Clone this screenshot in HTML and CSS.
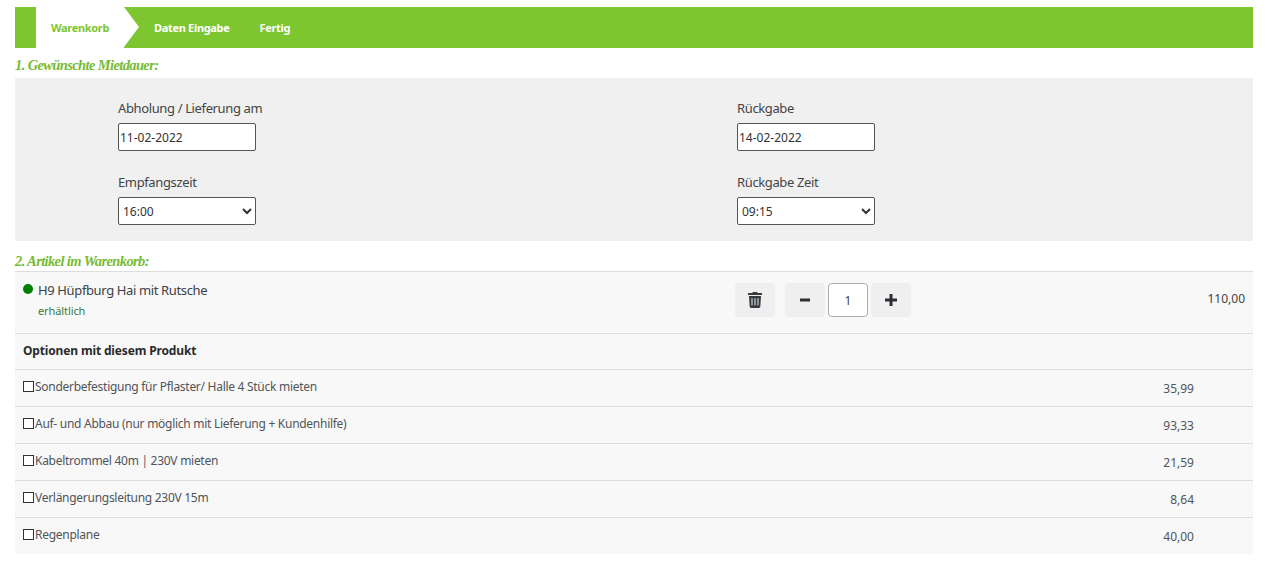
FILE: index.html
```html
<!DOCTYPE html>
<html lang="de">
<head>
<meta charset="utf-8">
<title>Warenkorb</title>
<link rel="stylesheet" href="styles.css">
</head>
<body>
<nav class="steps">
  <a class="step active">Warenkorb<span class="arrow"></span></a>
  <a class="step">Daten Eingabe</a>
  <a class="step">Fertig</a>
</nav>
<h2 class="title first">1. Gewünschte Mietdauer:</h2>
<section class="panel">
  <div class="field">
    <label>Abholung / Lieferung am</label>
    <input class="control" type="text" value="11-02-2022">
  </div>
  <div class="field">
    <label>Rückgabe</label>
    <input class="control" type="text" value="14-02-2022">
  </div>
  <div class="field">
    <label>Empfangszeit</label>
    <select class="control"><option>16:00</option></select>
  </div>
  <div class="field">
    <label>Rückgabe Zeit</label>
    <select class="control"><option>09:15</option></select>
  </div>
</section>
<h2 class="title second">2. Artikel im Warenkorb:</h2>
<section class="cart">
  <div class="product">
    <div class="info">
      <div class="name"><span class="dot"></span>H9 Hüpfburg Hai mit Rutsche</div>
      <div class="avail">erhältlich</div>
    </div>
    <div class="actions">
      <button class="btn trash" aria-label="Löschen">
        <svg width="14" height="16" viewBox="0 0 448 512"><path fill="#343a40" d="M432 32H312l-9.400-18.700A24 24 0 0 0 281.100 0H166.800a23.700 23.700 0 0 0-21.400 13.300L136 32H16A16 16 0 0 0 0 48v32a16 16 0 0 0 16 16h416a16 16 0 0 0 16-16V48a16 16 0 0 0-16-16zM53.200 467a48 48 0 0 0 47.900 45h245.800a48 48 0 0 0 47.900-45L416 128H32zM144 208v208a16 16 0 0 1-32 0V208a16 16 0 0 1 32 0zm96 0v208a16 16 0 0 1-32 0V208a16 16 0 0 1 32 0zm96 0v208a16 16 0 0 1-32 0V208a16 16 0 0 1 32 0z"/></svg>
      </button>
      <button class="btn minus" aria-label="Weniger">
        <svg width="10" height="12" viewBox="0 0 10 12"><rect x="0" y="4.500" width="10" height="3" fill="#2b2f33"/></svg>
      </button>
      <input class="qty" type="text" value="1">
      <button class="btn plus" aria-label="Mehr">
        <svg width="12" height="12" viewBox="0 0 12 12"><path fill="#2b2f33" d="M4.500 0h3v4.500H12v3H7.500V12h-3V7.500H0v-3h4.500z"/></svg>
      </button>
    </div>
    <div class="price">110,00</div>
  </div>
  <div class="head">Optionen mit diesem Produkt</div>
  <div class="option"><span class="box"></span><span class="label">Sonderbefestigung für Pflaster/ Halle 4 Stück mieten</span><span class="opt-price">35,99</span></div>
  <div class="option"><span class="box"></span><span class="label">Auf- und Abbau (nur möglich mit Lieferung + Kundenhilfe)</span><span class="opt-price">93,33</span></div>
  <div class="option"><span class="box"></span><span class="label">Kabeltrommel 40m | 230V mieten</span><span class="opt-price">21,59</span></div>
  <div class="option"><span class="box"></span><span class="label">Verlängerungsleitung 230V 15m</span><span class="opt-price">8,64</span></div>
  <div class="option"><span class="box"></span><span class="label">Regenplane</span><span class="opt-price">40,00</span></div>
</section>
</body>
</html>
```
FILE: styles.css
```css
* { box-sizing: border-box; }
html, body { height: 565px; overflow: hidden; }
body {
  margin: 0;
  padding: 7px 16px 0 15px;
  background: #fff;
  color: #3c4146;
  font-family: "Noto Sans", "Open Sans", sans-serif;
  font-size: 13px;
}
.steps {
  display: flex;
  align-items: stretch;
  height: 41px;
  padding-left: 21px;
  background: #7dc630;
}
.step {
  display: flex;
  align-items: center;
  margin-right: 30px;
  color: #fff;
  font-size: 11px;
  font-weight: 700;
  letter-spacing: -0.320px;
}
.step.active {
  position: relative;
  width: 88px;
  margin-right: 30px;
  padding-left: 15px;
  background: #fff;
  color: #7dc630;
}
.arrow {
  position: absolute;
  top: 0;
  left: 88px;
  border-top: 20.500px solid transparent;
  border-bottom: 20.500px solid transparent;
  border-left: 15px solid #fff;
}
.title {
  margin: 0;
  color: #75bb33;
  font-family: "Liberation Serif", serif;
  font-size: 14.500px;
  font-style: italic;
  font-weight: 700;
  letter-spacing: -0.620px;
  line-height: 20px;
}
.title.first { padding-top: 7px; height: 30px; }
.title.second { padding-top: 10px; height: 30px; }
.panel {
  display: grid;
  grid-template-columns: 619px 1fr;
  grid-auto-rows: 53px;
  row-gap: 21px;
  height: 163px;
  padding: 20px 0 0 103px;
  background: #f0f0f0;
}
.field { display: flex; flex-direction: column; }
.field label {
  height: 25px;
  color: #444;
  font-size: 13px;
  letter-spacing: -0.370px;
  line-height: 20px;
}
.control {
  width: 138px;
  height: 28px;
  padding: 0 1px;
  border: 1px solid #555;
  border-radius: 2px;
  background: #fff;
  color: #333;
  font-family: inherit;
  font-size: 12px;
}
select.control { padding-left: 0; }
.cart { border-top: 1px solid #ddd; background: #f8f8f8; }
.product {
  position: relative;
  display: flex;
  height: 62px;
  padding: 0 8px;
  border-bottom: 1px solid #ddd;
}
.info { width: 712px; padding-top: 8px; }
.name {
  display: flex;
  align-items: center;
  height: 20px;
  font-size: 13px;
  letter-spacing: -0.370px;
}
.dot {
  width: 10px;
  height: 10px;
  margin: -2px 5px 0 0;
  border-radius: 50%;
  background: #008000;
}
.avail {
  margin: 2px 0 0 15px;
  color: #3c7a3c;
  font-size: 11px;
  letter-spacing: -0.100px;
  line-height: 18px;
}
.actions { display: flex; align-items: center; height: 34px; margin-top: 11px; }
.btn {
  display: flex;
  align-items: center;
  justify-content: center;
  width: 40px;
  height: 34px;
  padding: 0;
  border: 0;
  border-radius: 4px;
  background: #efefef;
}
.trash { margin-right: 10px; }
.qty {
  width: 40px;
  height: 34px;
  margin: 0 3px;
  border: 1px solid #aaa;
  border-radius: 4px;
  background: #fff;
  color: #444;
  font-family: inherit;
  font-size: 12px;
  text-align: center;
}
.price {
  margin-left: auto;
  padding-top: 17px;
  color: #444;
  font-size: 12px;
  line-height: 20px;
}
.head {
  height: 36px;
  padding-left: 8px;
  border-bottom: 1px solid #ddd;
  color: #2b2b2b;
  font-size: 12px;
  font-weight: 700;
  letter-spacing: -0.150px;
  line-height: 34px;
}
.option {
  display: flex;
  align-items: center;
  height: 37px;
  padding: 0 59px 0 8px;
  border-bottom: 1px solid #ddd;
  color: #50555a;
  font-size: 12px;
}
.option:last-child { height: 36px; border-bottom: 0; }
.box {
  flex: none;
  width: 11px;
  height: 11px;
  margin: -3px 1px 0 0;
  border: 1px solid #333;
  background: #fff;
}
.label { margin-top: -3px; letter-spacing: -0.280px; }
.opt-price { margin-left: auto; font-size: 12px; }
```
